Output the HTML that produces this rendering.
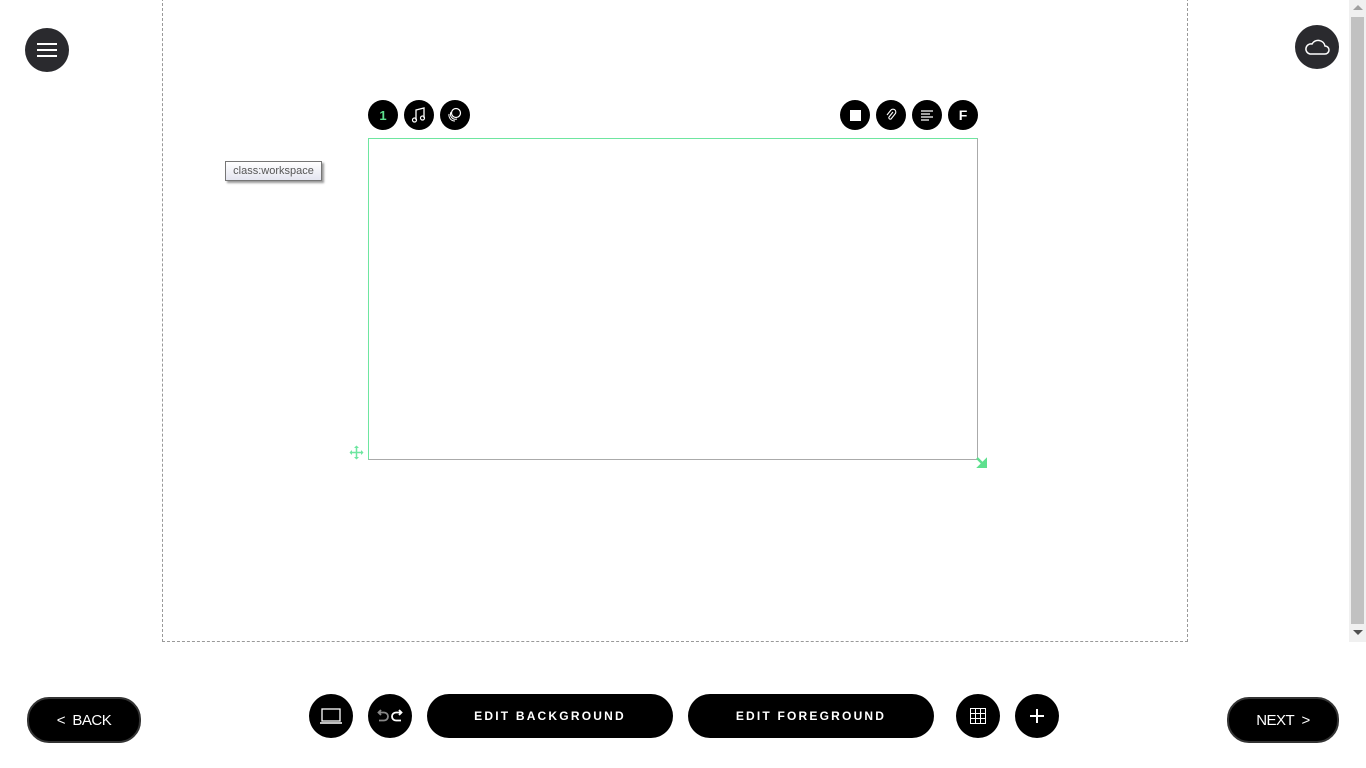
<!DOCTYPE html>
<html><head><meta charset="utf-8"><style>
*{margin:0;padding:0;box-sizing:border-box}
html,body{width:1366px;height:768px;overflow:hidden;background:#fff;font-family:"Liberation Sans",sans-serif}
.abs{position:absolute}
.circ{position:absolute;border-radius:50%;background:#000;display:flex;align-items:center;justify-content:center;color:#fff}
.dark{background:#2a2a2e}
.pill{position:absolute;background:#000;color:#fff;border-radius:22px;display:flex;align-items:center;justify-content:center;font-weight:bold;font-size:12px;letter-spacing:2.2px}
.nav{position:absolute;background:#000;color:#fff;border:2px solid #333;border-radius:22px;display:flex;align-items:center;justify-content:center;font-size:15px;letter-spacing:-0.5px}
</style></head><body>
<div class="abs" style="left:162px;top:-2px;width:1026px;height:644px;border:1px dashed #999"></div>
<div class="abs" style="left:1349px;top:0;width:17px;height:642px;background:#f0f0f0"></div>
<div class="abs" style="left:1351px;top:17px;width:13px;height:607px;background:#c1c1c1"></div>
<div class="abs" style="left:1353px;top:5px;width:0;height:0;border-left:5px solid transparent;border-right:5px solid transparent;border-bottom:5px solid #a0a0a0"></div>
<div class="abs" style="left:1353px;top:630px;width:0;height:0;border-left:5px solid transparent;border-right:5px solid transparent;border-top:5px solid #505050"></div>

<div class="circ dark" style="left:25px;top:28px;width:44px;height:44px">
<svg width="22" height="16"><path d="M1 2H21M1 8H21M1 14H21" stroke="#fff" stroke-width="2"/></svg></div>
<div class="circ dark" style="left:1295px;top:25px;width:44px;height:44px">
<svg width="26" height="20" viewBox="0 0 26 20"><path d="M6 17H21a4 4 0 0 0 0-8 7 7 0 0 0-13-2A5 5 0 0 0 6 17Z" fill="none" stroke="#fff" stroke-width="1.5"/></svg></div>

<div class="abs" style="left:225px;top:161px;width:97px;height:20px;border:1px solid #767676;background:linear-gradient(#fff,#e4e5f0);font-size:11px;color:#555;display:flex;align-items:center;justify-content:center;box-shadow:2px 2px 2px #999">class:workspace</div>

<div class="circ" style="left:368px;top:100px;width:30px;height:30px;color:#5ee08e;font-weight:bold;font-size:13px">1</div>
<div class="circ" style="left:404px;top:100px;width:30px;height:30px"><svg width="16" height="16" viewBox="0 0 16 16"><path d="M5 13V3L13 1V11" fill="none" stroke="#fff" stroke-width="1.3"/><circle cx="3.5" cy="13" r="2" fill="none" stroke="#fff" stroke-width="1.2"/><circle cx="11.5" cy="11" r="2" fill="none" stroke="#fff" stroke-width="1.2"/></svg></div>
<div class="circ" style="left:440px;top:100px;width:30px;height:30px"><svg width="16" height="16" viewBox="0 0 16 16"><circle cx="9" cy="6" r="4.5" fill="none" stroke="#fff" stroke-width="1.2"/><path d="M4 5a5 5 0 0 0 6 7M2 7a6 6 0 0 0 6 7" fill="none" stroke="#fff" stroke-width="1"/></svg></div>

<div class="circ" style="left:840px;top:100px;width:30px;height:30px"><div style="width:11px;height:11px;background:#fff"></div></div>
<div class="circ" style="left:876px;top:100px;width:30px;height:30px"><svg width="14" height="14" viewBox="0 0 14 14"><path d="M9 4L5 9a1.5 1.5 0 0 0 2 2L11 6a2.8 2.8 0 0 0-4-4L3 7" fill="none" stroke="#fff" stroke-width="1.1"/></svg></div>
<div class="circ" style="left:912px;top:100px;width:30px;height:30px"><svg width="12" height="11"><path d="M0 1H12M0 4H9M0 7H12M0 10H8" stroke="#fff" stroke-width="1.2"/></svg></div>
<div class="circ" style="left:948px;top:100px;width:30px;height:30px;font-weight:bold;font-size:14px">F</div>

<div class="abs" style="left:368px;top:138px;width:610px;height:322px;border:1px solid #6ee6a0;border-right-color:#aaa;border-bottom-color:#aaa;border-top-color:#6ee6a0"></div>
<svg class="abs" style="left:349px;top:445px" width="15" height="15" viewBox="0 0 15 15"><path d="M7.5 1V14M1 7.5H14" stroke="#6ee6a0" stroke-width="1.5"/><path d="M5 3L7.5 0.5 10 3M5 12L7.5 14.5 10 12M3 5L0.5 7.5 3 10M12 5L14.5 7.5 12 10" fill="#6ee6a0"/></svg>
<svg class="abs" style="left:976px;top:457px" width="11" height="11"><path d="M1 1L8 8M10 3V10H3Z" stroke="#5ee08e" stroke-width="2.5" fill="#5ee08e"/></svg>

<div class="nav" style="left:27px;top:697px;width:114px;height:46px">&lt;&nbsp;&nbsp;BACK</div>
<div class="nav" style="left:1227px;top:697px;width:112px;height:46px">NEXT&nbsp;&nbsp;&gt;</div>

<div class="circ" style="left:309px;top:694px;width:44px;height:44px"><svg width="24" height="18"><rect x="3" y="2" width="18" height="12" fill="none" stroke="#fff" stroke-width="1.3"/><path d="M1 16H23" stroke="#fff" stroke-width="1.5"/></svg></div>
<div class="circ" style="left:368px;top:694px;width:44px;height:44px"><svg width="26" height="14" viewBox="0 0 26 14"><path d="M4 1L1.5 3.5 4 6M2 3.5H7a4 4 0 0 1 0 8H2" fill="none" stroke="#888" stroke-width="1.8"/><path d="M22 1L24.5 3.5 22 6M24 3.5H19a4 4 0 0 0 0 8H24" fill="none" stroke="#fff" stroke-width="1.8"/></svg></div>
<div class="pill" style="left:427px;top:694px;width:246px;height:44px">EDIT BACKGROUND</div>
<div class="pill" style="left:688px;top:694px;width:246px;height:44px">EDIT FOREGROUND</div>
<div class="circ" style="left:956px;top:694px;width:44px;height:44px"><svg width="16" height="16"><path d="M0.5 0.5H15.5V15.5H0.5ZM5.5 0.5V15.5M10.5 0.5V15.5M0.5 5.5H15.5M0.5 10.5H15.5" fill="none" stroke="#fff" stroke-width="1"/></svg></div>
<div class="circ" style="left:1015px;top:694px;width:44px;height:44px"><svg width="16" height="16"><path d="M8 1V15M1 8H15" stroke="#fff" stroke-width="2"/></svg></div>
</body></html>
